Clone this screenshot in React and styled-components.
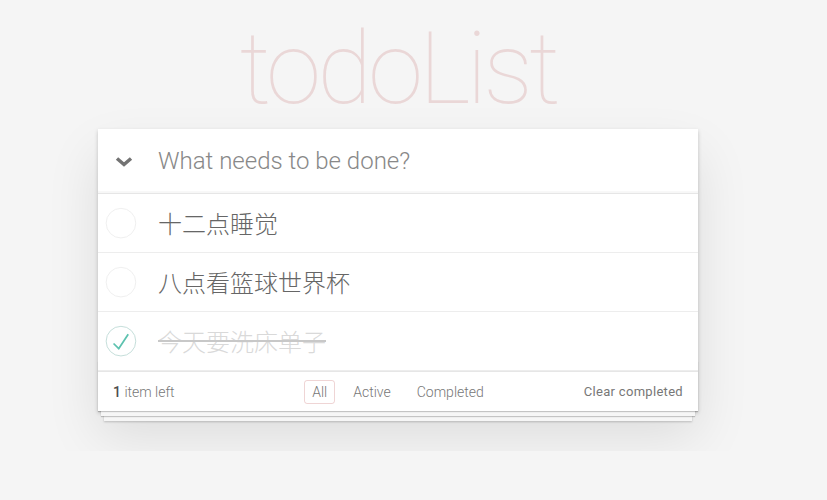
import React, { useState } from 'react';
import styled, { createGlobalStyle } from 'styled-components';

const GlobalStyle = createGlobalStyle`
	html, body {
		margin: 0;
		padding: 0;
	}
	body {
		background: #f5f5f5;
		font-family: Roboto, "Helvetica Neue", "Noto Sans CJK SC", sans-serif;
		font-weight: 300;
		color: #4d4d4d;
		-webkit-font-smoothing: antialiased;
	}
`;

const Page = styled.section`
	width: 600px;
	margin: 0 0 40px 98px;
`;

const Title = styled.h1`
	margin: 19px 0 10px;
	height: 100px;
	font-size: 100px;
	line-height: 100px;
	font-weight: 100;
	letter-spacing: -4px;
	text-align: center;
	color: rgba(175, 47, 47, 0.15);
`;

const Card = styled.div`
	position: relative;
	background: #fff;
	box-shadow: 0 2px 4px 0 rgba(0, 0, 0, 0.2), 0 25px 50px 0 rgba(0, 0, 0, 0.1);
`;

const Header = styled.div`
	display: flex;
	align-items: center;
	height: 64px;
	border-bottom: 1px solid #e6e6e6;
	box-shadow: inset 0 -2px 1px rgba(0, 0, 0, 0.03);
`;

const ToggleAll = styled.button`
	width: 60px;
	height: 64px;
	padding: 2px 0 0 17px;
	border: 0;
	background: none;
	display: flex;
	align-items: center;
	cursor: pointer;
`;

const NewTodo = styled.input`
	flex: 1;
	height: 64px;
	border: 0;
	outline: none;
	padding: 0 16px 0 0;
	font-family: inherit;
	font-size: 24px;
	font-weight: 300;
	color: #4d4d4d;
	background: transparent;

	&::placeholder {
		color: #888;
		opacity: 1;
	}
`;

const List = styled.ul`
	margin: 0;
	padding: 0;
	list-style: none;
`;

const Item = styled.li`
	display: flex;
	align-items: center;
	height: 58px;
	border-bottom: 1px solid #ededed;
`;

const Toggle = styled.button`
	width: 46px;
	height: 40px;
	padding: 0;
	border: 0;
	background: none;
	display: flex;
	align-items: center;
	cursor: pointer;
`;

const Label = styled.label`
	margin-left: 14px;
	font-size: 24px;
	line-height: 1.2;
	font-family: "Noto Sans CJK SC", Roboto, sans-serif;
	font-weight: 300;
	color: ${(p) => (p.$done ? '#d9d9d9' : '#666')};
	text-decoration: ${(p) => (p.$done ? 'line-through' : 'none')};
	text-decoration-color: ${(p) => (p.$done ? '#c8c8c8' : 'currentColor')};
`;

const Footer = styled.footer`
	position: relative;
	display: flex;
	align-items: center;
	justify-content: space-between;
	height: 39px;
	padding: 0 15px;
	border-top: 1px solid #e6e6e6;
	font-size: 14px;
	color: #777;

	&::before {
		content: '';
		position: absolute;
		right: 0;
		bottom: 0;
		left: 0;
		height: 50px;
		overflow: hidden;
		box-shadow: 0 1px 1px rgba(0, 0, 0, 0.2), 0 8px 0 -3px #f6f6f6,
			0 9px 1px -3px rgba(0, 0, 0, 0.2), 0 16px 0 -6px #f6f6f6,
			0 17px 2px -6px rgba(0, 0, 0, 0.2);
		pointer-events: none;
	}
`;

const Count = styled.span`
	position: relative;
	strong {
		font-weight: 500;
		color: #4d4d4d;
	}
`;

const Filters = styled.ul`
	position: absolute;
	left: 0;
	right: 0;
	margin: 0;
	padding: 0;
	list-style: none;
	display: flex;
	justify-content: center;
	gap: 10px;
`;

const Filter = styled.a`
	display: block;
	padding: 3px 7px;
	border: 1px solid ${(p) => (p.$active ? 'rgba(175, 47, 47, 0.2)' : 'transparent')};
	border-radius: 3px;
	color: #777;
	text-decoration: none;
	cursor: pointer;
`;

const Clear = styled.button`
	position: relative;
	border: 0;
	background: none;
	padding: 0;
	font-family: Roboto, sans-serif;
	font-weight: 400;
	font-size: 13px;
	letter-spacing: 0.3px;
	color: #777;
	cursor: pointer;
`;

const Chevron = () => (
	<svg width="18" height="12" viewBox="0 0 18 12">
		<polyline points="2,2.5 9,8.5 16,2.5" fill="none" stroke="#737373" strokeWidth="3.5" />
	</svg>
);

const Circle = ({ done }) => (
	<svg width="40" height="40" viewBox="-10 -18 100 135">
		<circle cx="50" cy="50" r="50" fill="none" stroke={done ? '#bddad5' : '#ededed'} strokeWidth="3" />
		{done && <path fill="#5dc2af" d="M72 25L42 71 27 56l-4 4 20 20 34-52z" />}
	</svg>
);

const initialTodos = [
	{ id: 1, title: '十二点睡觉', done: false },
	{ id: 2, title: '八点看篮球世界杯', done: false },
	{ id: 3, title: '今天要洗床单子', done: true },
];

export default function App() {
	const [todos, setTodos] = useState(initialTodos);
	const [filter, setFilter] = useState('All');
	const [left] = useState(1);

	const toggle = (id) => setTodos(todos.map((t) => (t.id === id ? { ...t, done: !t.done } : t)));

	return (
		<>
			<GlobalStyle />
			<Page>
				<Title>todoList</Title>
				<Card>
					<Header>
						<ToggleAll>
							<Chevron />
						</ToggleAll>
						<NewTodo placeholder="What needs to be done?" />
					</Header>
					<List>
						{todos.map((todo) => (
							<Item key={todo.id}>
								<Toggle onClick={() => toggle(todo.id)}>
									<Circle done={todo.done} />
								</Toggle>
								<Label $done={todo.done}>{todo.title}</Label>
							</Item>
						))}
					</List>
					<Footer>
						<Count>
							<strong>{left}</strong> item left
						</Count>
						<Filters>
							{['All', 'Active', 'Completed'].map((f) => (
								<li key={f}>
									<Filter $active={filter === f} onClick={() => setFilter(f)}>
										{f}
									</Filter>
								</li>
							))}
						</Filters>
						<Clear>Clear completed</Clear>
					</Footer>
				</Card>
			</Page>
		</>
	);
}
